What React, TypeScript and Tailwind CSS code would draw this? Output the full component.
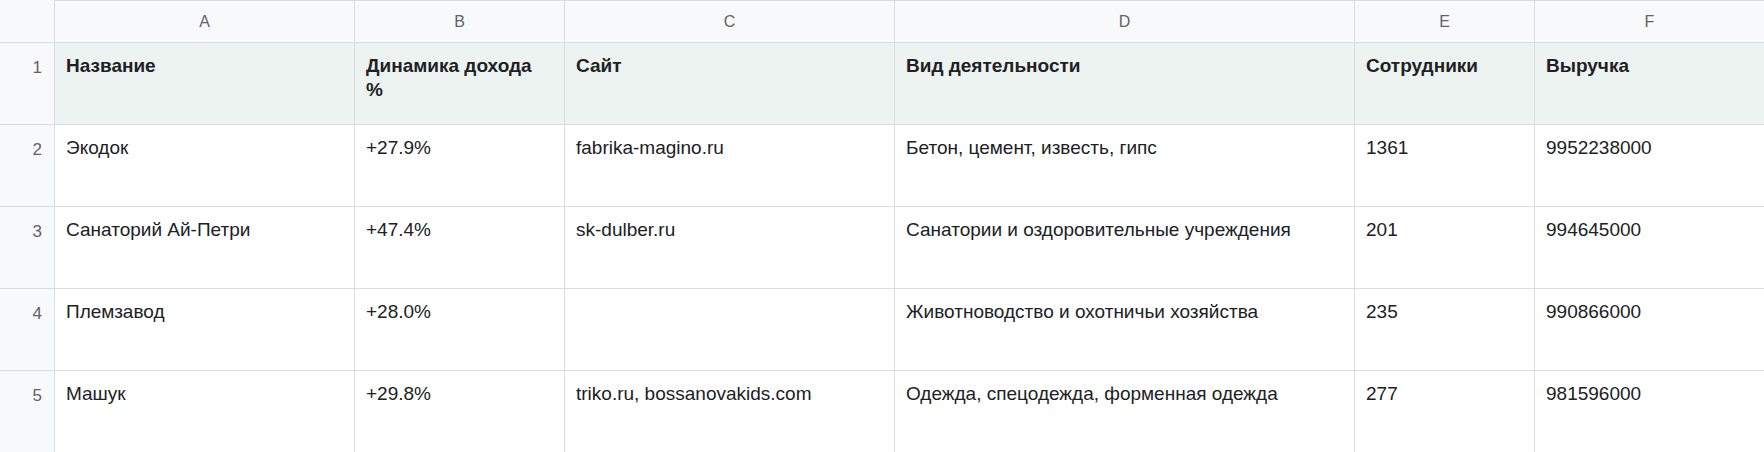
import React from 'react';

const columns = ['A', 'B', 'C', 'D', 'E', 'F'];

const header = ['Название', 'Динамика дохода %', 'Сайт', 'Вид деятельности', 'Сотрудники', 'Выручка'];

const rows = [
  ['Экодок', '+27.9%', 'fabrika-magino.ru', 'Бетон, цемент, известь, гипс', '1361', '9952238000'],
  ['Санаторий Ай-Петри', '+47.4%', 'sk-dulber.ru', 'Санатории и оздоровительные учреждения', '201', '994645000'],
  ['Племзавод', '+28.0%', '', 'Животноводство и охотничьи хозяйства', '235', '990866000'],
  ['Машук', '+29.8%', 'triko.ru, bossanovakids.com', 'Одежда, спецодежда, форменная одежда', '277', '981596000'],
];

const App: React.FC = () => {
  return (
    <div
      className="w-[1764px] h-[452px] overflow-hidden bg-white text-[#202124]"
      style={{ fontFamily: '"Liberation Sans", Arial, sans-serif' }}
    >
      <div className="grid grid-cols-[55px_300px_210px_330px_460px_180px_1fr]">
        {/* column letters */}
        <div className="h-[43px] bg-[#f8f9fa] border-r border-b border-[#dadce0]" />
        {columns.map((c, i) => (
          <div
            key={c}
            className={`h-[43px] flex items-center justify-center bg-[#f8f9fa] border-t border-b border-[#dadce0] text-[16px] text-[#5f6368] ${
              i < columns.length - 1 ? 'border-r' : ''
            }`}
          >
            {c}
          </div>
        ))}

        {/* header row */}
        <div className="h-[82px] bg-[#f8f9fa] border-r border-b border-[#dadce0] flex justify-end pr-[12px] pt-[14px] text-[17px] leading-[22px] text-[#5f6368]">
          1
        </div>
        {header.map((h, i) => (
          <div
            key={h}
            className={`h-[82px] bg-[#edf3f0] border-b border-[#dadce0] pl-[11px] pr-[16px] pt-[11px] text-[19px] leading-[24px] font-bold ${
              i < header.length - 1 ? 'border-r' : ''
            }`}
          >
            {h}
          </div>
        ))}

        {/* data rows */}
        {rows.map((r, ri) => (
          <React.Fragment key={ri}>
            <div className="h-[82px] bg-[#f8f9fa] border-r border-b border-[#dadce0] flex justify-end pr-[12px] pt-[14px] text-[17px] leading-[22px] text-[#5f6368]">
              {ri + 2}
            </div>
            {r.map((v, ci) => (
              <div
                key={ci}
                className={`h-[82px] bg-white border-b border-[#dadce0] pl-[11px] pr-[10px] pt-[11px] text-[19px] leading-[24px] whitespace-nowrap ${
                  ci < r.length - 1 ? 'border-r' : ''
                }`}
              >
                {v}
              </div>
            ))}
          </React.Fragment>
        ))}
      </div>
    </div>
  );
};

export default App;
